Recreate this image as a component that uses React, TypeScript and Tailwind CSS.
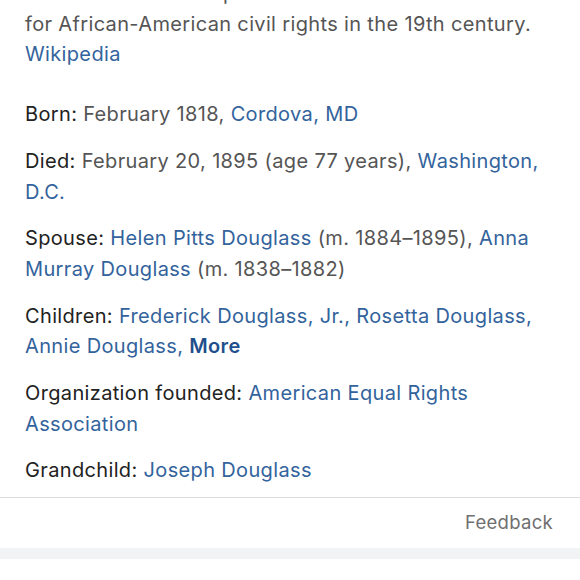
export default function App() {
  const link = 'text-[#33639c]';
  return (
    <main className="w-[580px] h-[580px] overflow-hidden bg-white font-['Inter',sans-serif]">
      <div className="px-[25px] text-[20px] leading-[30.7px] tracking-[0.35px] text-[#555]">
        {/* Description (top line cut off) */}
        <p className="-mt-[22px]">
          became the most important leader of the movement
          <br />
          for African-American civil rights in the 19th century.
          <span className={`block ${link}`}>Wikipedia</span>
        </p>

        {/* Facts */}
        <div className="mt-[29px] flex flex-col gap-[16px]">
          <p>
            <span className="text-[#222]">Born: </span>February 1818, <span className={link}>Cordova, MD</span>
          </p>
          <p>
            <span className="text-[#222]">Died: </span>February 20, 1895 (age 77 years), <span className={link}>Washington, D.C.</span>
          </p>
          <p>
            <span className="text-[#222]">Spouse: </span>
            <span className={link}>Helen Pitts Douglass</span> (m. 1884–1895), <span className={link}>Anna Murray Douglass</span> (m. 1838–1882)
          </p>
          <p>
            <span className="text-[#222]">Children: </span>
            <span className={link}>Frederick Douglass, Jr., Rosetta Douglass, Annie Douglass, </span>
            <span className="font-semibold text-[#1f4f8c]">More</span>
          </p>
          <p>
            <span className="text-[#222]">Organization founded: </span>
            <span className={link}>American Equal Rights Association</span>
          </p>
          <p>
            <span className="text-[#222]">Grandchild: </span>
            <span className={link}>Joseph Douglass</span>
          </p>
        </div>
      </div>

      {/* Footer */}
      <div className="mt-[11px] border-t border-[#dadce0]">
        <div className="flex justify-end px-[27px] pt-[11px] pb-[12px] text-[18.5px] leading-[27px] tracking-[0.3px] text-[#6f6f6f]">Feedback</div>
        <div className="h-[11px] bg-[#f1f3f4]" />
      </div>
    </main>
  );
}
